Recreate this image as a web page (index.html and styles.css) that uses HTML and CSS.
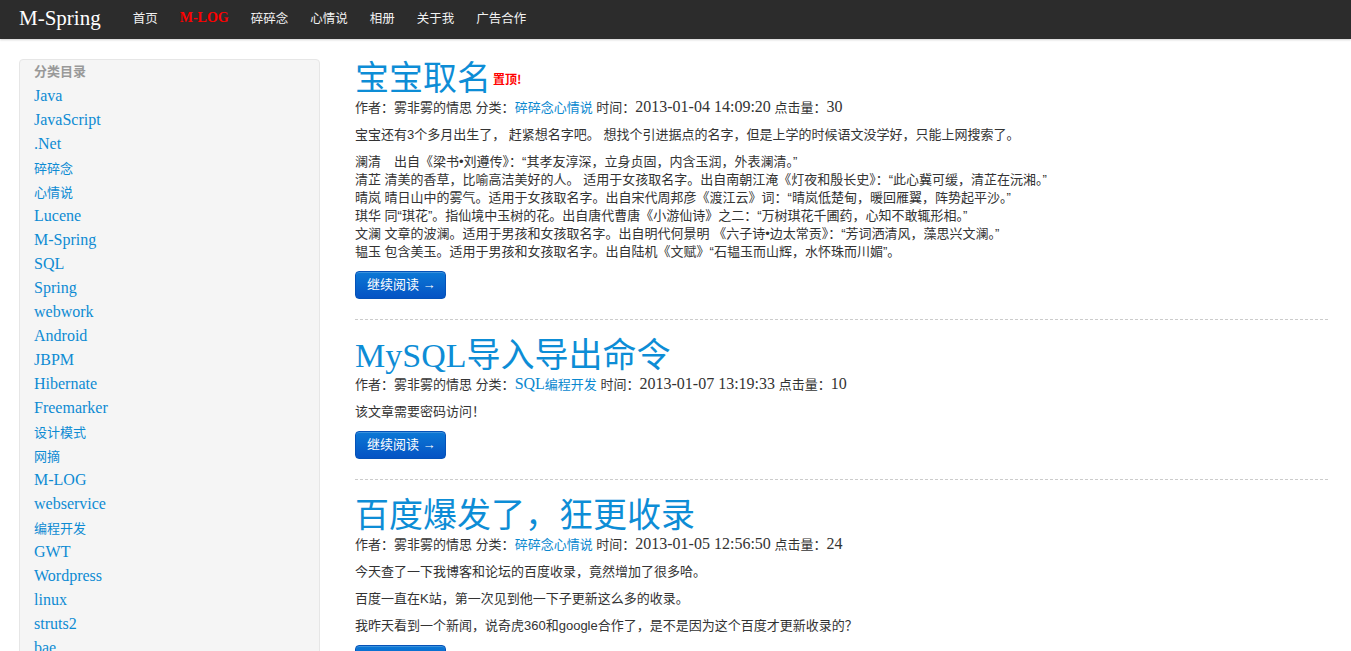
FILE: index.html
```html
<!DOCTYPE html>
<html lang="zh-CN">
<head>
<meta charset="utf-8">
<title>M-Spring</title>
<link rel="stylesheet" href="styles.css">
</head>
<body>
<header class="navbar">
  <a class="brand" href="#">M-Spring</a>
  <nav class="nav">
    <a href="#">首页</a>
    <a href="#" class="active">M-LOG</a>
    <a href="#">碎碎念</a>
    <a href="#">心情说</a>
    <a href="#">相册</a>
    <a href="#">关于我</a>
    <a href="#">广告合作</a>
  </nav>
</header>

<div class="layout">
  <aside class="sidebar">
    <div class="side-head">分类目录</div>
    <ul class="side-list">
      <li><a href="#">Java</a></li>
      <li><a href="#">JavaScript</a></li>
      <li><a href="#">.Net</a></li>
      <li><a href="#" class="zh">碎碎念</a></li>
      <li><a href="#" class="zh">心情说</a></li>
      <li><a href="#">Lucene</a></li>
      <li><a href="#">M-Spring</a></li>
      <li><a href="#">SQL</a></li>
      <li><a href="#">Spring</a></li>
      <li><a href="#">webwork</a></li>
      <li><a href="#">Android</a></li>
      <li><a href="#">JBPM</a></li>
      <li><a href="#">Hibernate</a></li>
      <li><a href="#">Freemarker</a></li>
      <li><a href="#" class="zh">设计模式</a></li>
      <li><a href="#" class="zh">网摘</a></li>
      <li><a href="#">M-LOG</a></li>
      <li><a href="#">webservice</a></li>
      <li><a href="#" class="zh">编程开发</a></li>
      <li><a href="#">GWT</a></li>
      <li><a href="#">Wordpress</a></li>
      <li><a href="#">linux</a></li>
      <li><a href="#">struts2</a></li>
      <li><a href="#">bae</a></li>
    </ul>
  </aside>

  <main class="content">
    <article class="post">
      <h2 class="post-title"><a href="#">宝宝取名</a><span class="top-tag">置顶!</span></h2>
      <p class="meta">作者：雾非雾的情思 分类：<a href="#">碎碎念</a><a href="#">心情说</a> 时间：<span class="num">2013-01-04 14:09:20</span> 点击量：<span class="num">30</span></p>
      <p>宝宝还有3个多月出生了， 赶紧想名字吧。 想找个引进据点的名字，但是上学的时候语文没学好，只能上网搜索了。</p>
      <p>澜清　出自《梁书•刘遵传》：“其孝友淳深，立身贞固，内含玉润，外表澜清。”<br>
      清芷 清美的香草，比喻高洁美好的人。 适用于女孩取名字。出自南朝江淹《灯夜和殷长史》：“此心冀可缓，清芷在沅湘。”<br>
      晴岚 晴日山中的雾气。适用于女孩取名字。出自宋代周邦彦《渡江云》词：“晴岚低楚甸，暖回雁翼，阵势起平沙。”<br>
      琪华 同“琪花”。指仙境中玉树的花。出自唐代曹唐《小游仙诗》之二：“万树琪花千圃药，心知不敢辄形相。”<br>
      文澜 文章的波澜。适用于男孩和女孩取名字。出自明代何景明 《六子诗•边太常贡》：“芳词洒清风，藻思兴文澜。”<br>
      韫玉 包含美玉。适用于男孩和女孩取名字。出自陆机《文赋》“石韫玉而山辉，水怀珠而川媚”。</p>
      <div class="more"><a href="#" class="btn">继续阅读 →</a></div>
    </article>
    <hr class="sep">
    <article class="post">
      <h2 class="post-title"><a href="#">MySQL导入导出命令</a></h2>
      <p class="meta">作者：雾非雾的情思 分类：<a href="#"><span class="num">SQL</span>编程开发</a> 时间：<span class="num">2013-01-07 13:19:33</span> 点击量：<span class="num">10</span></p>
      <p>该文章需要密码访问！</p>
      <div class="more"><a href="#" class="btn">继续阅读 →</a></div>
    </article>
    <hr class="sep">
    <article class="post">
      <h2 class="post-title"><a href="#">百度爆发了，狂更收录</a></h2>
      <p class="meta">作者：雾非雾的情思 分类：<a href="#">碎碎念</a><a href="#">心情说</a> 时间：<span class="num">2013-01-05 12:56:50</span> 点击量：<span class="num">24</span></p>
      <p>今天查了一下我博客和论坛的百度收录，竟然增加了很多哈。</p>
      <p>百度一直在K站，第一次见到他一下子更新这么多的收录。</p>
      <p>我昨天看到一个新闻，说奇虎360和google合作了，是不是因为这个百度才更新收录的？</p>
      <div class="more"><a href="#" class="btn">继续阅读 →</a></div>
    </article>
  </main>
</div>
</body>
</html>
```

FILE: styles.css
```css
html {
  scrollbar-width: none;
}
html, body {
  margin: 0;
  padding: 0;
}
body {
  background: #fff;
  color: #333;
  font-family: "Liberation Sans", "Noto Sans CJK SC", sans-serif;
  font-size: 13px;
  line-height: 18px;
}
a {
  text-decoration: none;
  color: #0a88cf;
}

/* navbar */
.navbar {
  height: 39px;
  background: #2c2c2c;
  box-shadow: 0 1px 2px rgba(0, 0, 0, 0.18);
  display: flex;
  align-items: center;
  padding: 0 0 3px 19px;
  box-sizing: border-box;
}
.brand {
  font-family: "Liberation Serif", serif;
  font-size: 21px;
  color: #fff;
  margin-right: 32px;
}
.nav {
  display: flex;
  align-items: center;
  gap: 22px;
}
.nav a {
  color: #f2f2f2;
  font-family: "Noto Sans CJK SC", sans-serif;
  font-size: 12.5px;
}
.nav a.active {
  color: #f00;
  font-family: "Liberation Serif", serif;
  font-weight: bold;
  font-size: 14px;
}

/* layout */
.layout {
  display: flex;
  align-items: flex-start;
  gap: 35px;
  padding: 20px 23px 0 19px;
}

/* sidebar */
.sidebar {
  width: 301px;
  flex: none;
  box-sizing: border-box;
  background: #f5f5f5;
  border: 1px solid #e6e6e6;
  border-radius: 4px;
  padding: 1px 0 0 14px;
}
.side-head {
  line-height: 20px;
  font-size: 13px;
  font-weight: bold;
  color: #999;
  font-family: "Noto Sans CJK SC", sans-serif;
}
.side-list {
  list-style: none;
  margin: 3px 0 0;
  padding: 0;
}
.side-list li {
  height: 24px;
  line-height: 24px;
}
.side-list a {
  font-family: "Liberation Serif", serif;
  font-size: 16px;
  color: #0d8bd3;
}
.side-list a.zh {
  font-family: "Noto Sans CJK SC", sans-serif;
  font-size: 13px;
}

/* content */
.content {
  flex: 1;
  min-width: 0;
}
.post-title {
  margin: 0;
  padding-top: 2px;
  font-family: "Liberation Serif", "Noto Sans CJK SC", serif;
  font-weight: normal;
  font-size: 34px;
  line-height: 36px;
}
.post-title a {
  color: #0d8dd6;
}
.top-tag {
  font-family: "Noto Sans CJK SC", sans-serif;
  font-size: 12px;
  font-weight: bold;
  color: #f00;
  vertical-align: 6px;
  margin-left: 2px;
}
.post p {
  margin: 0 0 9px;
  line-height: 18px;
}
.post p.meta {
  margin: 0 0 8px;
  line-height: 20px;
}
.num {
  font-family: "Liberation Serif", serif;
  font-size: 16px;
}
.more {
  display: flex;
  padding-top: 1px;
}
.btn {
  display: block;
  padding: 3px 9px 3px 11px;
  line-height: 20px;
  font-size: 13px;
  color: #fff;
  background: linear-gradient(#0b78d5, #0553c4);
  border: 1px solid #0552b8;
  border-radius: 4px;
  box-shadow: inset 0 1px 0 rgba(255, 255, 255, 0.2);
}
.sep {
  border: 0;
  border-top: 1px dashed #ccc;
  margin: 20px 0 16px;
  height: 0;
}
```
